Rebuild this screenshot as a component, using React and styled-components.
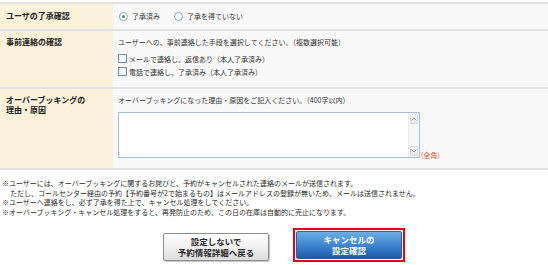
import React from "react";
import styled, { createGlobalStyle } from "styled-components";

const GlobalStyle = createGlobalStyle`
  body {
    margin: 0;
    background: #ffffff;
    font-family: "Noto Sans CJK JP", "Noto Sans", sans-serif;
    color: #2a2a2a;
  }
`;

const Page = styled.div`
  width: 548px;
  padding-top: 2px;
`;

const Table = styled.div`
  border-top: 2px solid #e2e2e2;
`;

const Row = styled.div`
  display: grid;
  grid-template-columns: 113px 1fr;
  height: ${(p) => p.h}px;
  border-bottom: 2px solid #e2e2e2;
`;

const Label = styled.div`
  background: #fcf1da;
  padding: ${(p) => p.pt || 6}px 6px 0 6px;
  font-size: 8px;
  line-height: 10px;
  font-weight: bold;
  color: #222222;
`;

const Cell = styled.div`
  background: #f8f8f8;
  padding: ${(p) => p.pt || 6}px 5px 0 5px;
  font-size: 7px;
  line-height: 10px;
  color: #333333;
`;

const RadioGroup = styled.div`
  display: flex;
  align-items: center;
  gap: 14px;
  padding-left: 1px;
`;

const RadioItem = styled.label`
  display: flex;
  align-items: center;
  gap: 4px;
`;

const Radio = styled.span`
  width: 7px;
  height: 7px;
  border: 1px solid #8da3ba;
  border-radius: 50%;
  background: #ffffff;
  display: flex;
  align-items: center;
  justify-content: center;

  &::after {
    content: "";
    width: 3px;
    height: 3px;
    border-radius: 50%;
    background: ${(p) => (p.checked ? "#2e9a52" : "transparent")};
  }
`;

const CheckList = styled.div`
  margin-top: 5px;
`;

const CheckItem = styled.label`
  display: flex;
  align-items: center;
  height: 13px;
  gap: 2px;
`;

const Box = styled.span`
  width: 7px;
  height: 7px;
  border: 1px solid #6f8fae;
  background: #ffffff;
`;

const AreaRow = styled.div`
  display: flex;
  align-items: flex-end;
  margin-top: 7px;
  gap: 1px;
`;

const AreaBox = styled.div`
  display: flex;
  width: 300px;
  height: 44px;
  border: 1px solid #a9bdd1;
  background: #ffffff;
`;

const Area = styled.textarea`
  flex: 1;
  border: none;
  outline: none;
  resize: none;
  background: transparent;
  padding: 2px;
  font-family: inherit;
  font-size: 7px;
`;

const ScrollBar = styled.div`
  width: 10px;
  display: flex;
  flex-direction: column;
  justify-content: space-between;
  background: #f6f6f6;
  border-left: 1px solid #ececec;
  padding: 1px 0;
`;

const ScrollBtn = styled.div`
  height: 8px;
  display: flex;
  align-items: center;
  justify-content: center;
  background: linear-gradient(#fbfbfb, #e6e6e6);
  border: 1px solid #dcdcdc;
  border-radius: 1px;
  margin: 0 1px;
`;

const Note = styled.span`
  color: #e4542f;
  font-size: 7px;
  line-height: 10px;
  margin-bottom: -2px;
`;

const Notes = styled.div`
  margin-top: 9px;
  padding-left: 2px;
  font-size: 7px;
  line-height: 9.7px;
  color: #2a2a2a;
`;

const Indent = styled.div`
  padding-left: 8px;
`;

const Buttons = styled.div`
  display: flex;
  justify-content: center;
  align-items: flex-end;
  gap: 24px;
  margin-top: 10px;
  padding-left: 20px;
`;

const GrayButton = styled.button`
  width: 106px;
  height: 28px;
  margin-bottom: 1px;
  border: 1px solid #8f8f8f;
  border-radius: 2px;
  background: linear-gradient(#ffffff, #f1f1f1 50%, #dcdcdc);
  box-shadow: 1px 1px 1px rgba(0, 0, 0, 0.25);
  font-family: inherit;
  font-size: 8.5px;
  line-height: 11px;
  font-weight: bold;
  color: #2a2a2a;
  padding: 0;
`;

const Focus = styled.div`
  border: 2px solid #e60012;
  padding: 1px;
  background: #ffffff;
`;

const BlueButton = styled.button`
  display: block;
  width: 106px;
  height: 28px;
  border: 1px solid #2b5f9f;
  border-radius: 2px;
  background: linear-gradient(#6eaee6, #3f86d0 50%, #1c5aa9);
  font-family: inherit;
  font-size: 8.5px;
  line-height: 11px;
  font-weight: bold;
  color: #ffffff;
  padding: 0;
`;

const Chevron = ({ up }) => (
  <svg width="6" height="4" viewBox="0 0 6 4">
    <path
      d={up ? "M0.5 3.5 L3 1 L5.5 3.5" : "M0.5 0.5 L3 3 L5.5 0.5"}
      fill="none"
      stroke="#a8a8a8"
      strokeWidth="1"
    />
  </svg>
);

export default function App() {
  return (
    <Page>
      <GlobalStyle />
      <Table>
        <Row h={25}>
          <Label pt={7}>ユーザの了承確認</Label>
          <Cell pt={7}>
            <RadioGroup>
              <RadioItem>
                <Radio checked />
                了承済み
              </RadioItem>
              <RadioItem>
                <Radio />
                了承を得ていない
              </RadioItem>
            </RadioGroup>
          </Cell>
        </Row>
        <Row h={56}>
          <Label>事前連絡の確認</Label>
          <Cell>
            ユーザーへの、事前連絡した手段を選択してください。（複数選択可能）
            <CheckList>
              <CheckItem>
                <Box />
                メールで連絡し、返信あり（本人了承済み）
              </CheckItem>
              <CheckItem>
                <Box />
                電話で連絡し、了承済み（本人了承済み）
              </CheckItem>
            </CheckList>
          </Cell>
        </Row>
        <Row h={79}>
          <Label>
            オーバーブッキングの
            <br />
            理由・原因
          </Label>
          <Cell>
            オーバーブッキングになった理由・原因をご記入ください。（400字以内）
            <AreaRow>
              <AreaBox>
                <Area />
                <ScrollBar>
                  <ScrollBtn>
                    <Chevron up />
                  </ScrollBtn>
                  <ScrollBtn>
                    <Chevron />
                  </ScrollBtn>
                </ScrollBar>
              </AreaBox>
              <Note>(全角)</Note>
            </AreaRow>
          </Cell>
        </Row>
      </Table>
      <Notes>
        <div>
          ※ユーザーには、オーバーブッキングに関するお詫びと、予約がキャンセルされた連絡のメールが送信されます。
        </div>
        <Indent>
          ただし、コールセンター経由の予約【予約番号が2で始まるもの】はメールアドレスの登録が無いため、メールは送信されません。
        </Indent>
        <div>※ユーザーへ連絡をし、必ず了承を得た上で、キャンセル処理をしてください。</div>
        <div>
          ※オーバーブッキング・キャンセル処理をすると、再発防止のため、この日の在庫は自動的に売止になります。
        </div>
      </Notes>
      <Buttons>
        <GrayButton>
          設定しないで
          <br />
          予約情報詳細へ戻る
        </GrayButton>
        <Focus>
          <BlueButton>
            キャンセルの
            <br />
            設定確認
          </BlueButton>
        </Focus>
      </Buttons>
    </Page>
  );
}
